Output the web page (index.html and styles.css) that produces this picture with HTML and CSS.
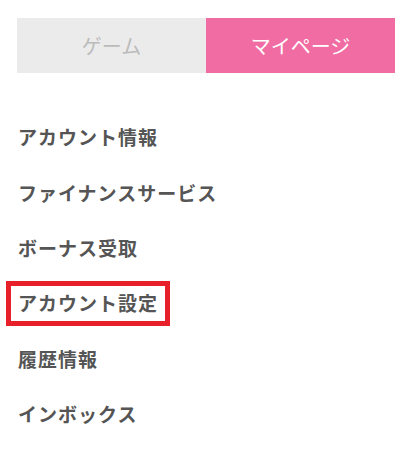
FILE: index.html
```html
<!DOCTYPE html>
<html lang="ja">
<head>
    <meta charset="UTF-8">
    <meta name="viewport" content="width=device-width, initial-scale=1.0">
    <title>マイページ</title>
    <link rel="stylesheet" href="styles.css">
</head>
<body>
    <div class="tabs">
        <a class="tab" href="#">ゲーム</a>
        <a class="tab active" href="#">マイページ</a>
    </div>

    <ul class="menu">
        <li><a href="#">アカウント情報</a></li>
        <li><a href="#">ファイナンスサービス</a></li>
        <li><a href="#">ボーナス受取</a></li>
        <li><a class="selected" href="#">アカウント設定</a></li>
        <li><a href="#">履歴情報</a></li>
        <li><a href="#">インボックス</a></li>
    </ul>
</body>
</html>
```

FILE: styles.css
```css
body {
    margin: 0;
    padding: 18px 12px 0 17px;
    background: #fff;
    font-family: "Noto Sans CJK JP", "Noto Sans", sans-serif;
}
.tabs {
    display: flex;
    width: 378px;
}
.tab {
    flex: 1;
    height: 55px;
    display: flex;
    align-items: center;
    justify-content: center;
    background: #ebebeb;
    color: #bbbbbb;
    font-size: 20px;
    text-decoration: none;
}
.tab.active {
    background: #f06ca3;
    color: #fff;
}
.menu {
    list-style: none;
    margin: 37px 0 0;
    padding: 0;
}
.menu li {
    height: 55.4px;
    display: flex;
    align-items: center;
}
.menu a {
    margin-left: -11px;
    padding: 5px 7px 6px;
    border: 5px solid transparent;
    color: #555;
    font-size: 19px;
    font-weight: bold;
    line-height: 24px;
    letter-spacing: 1px;
    text-decoration: none;
}
.menu a.selected {
    border-color: #e8202a;
}
```
